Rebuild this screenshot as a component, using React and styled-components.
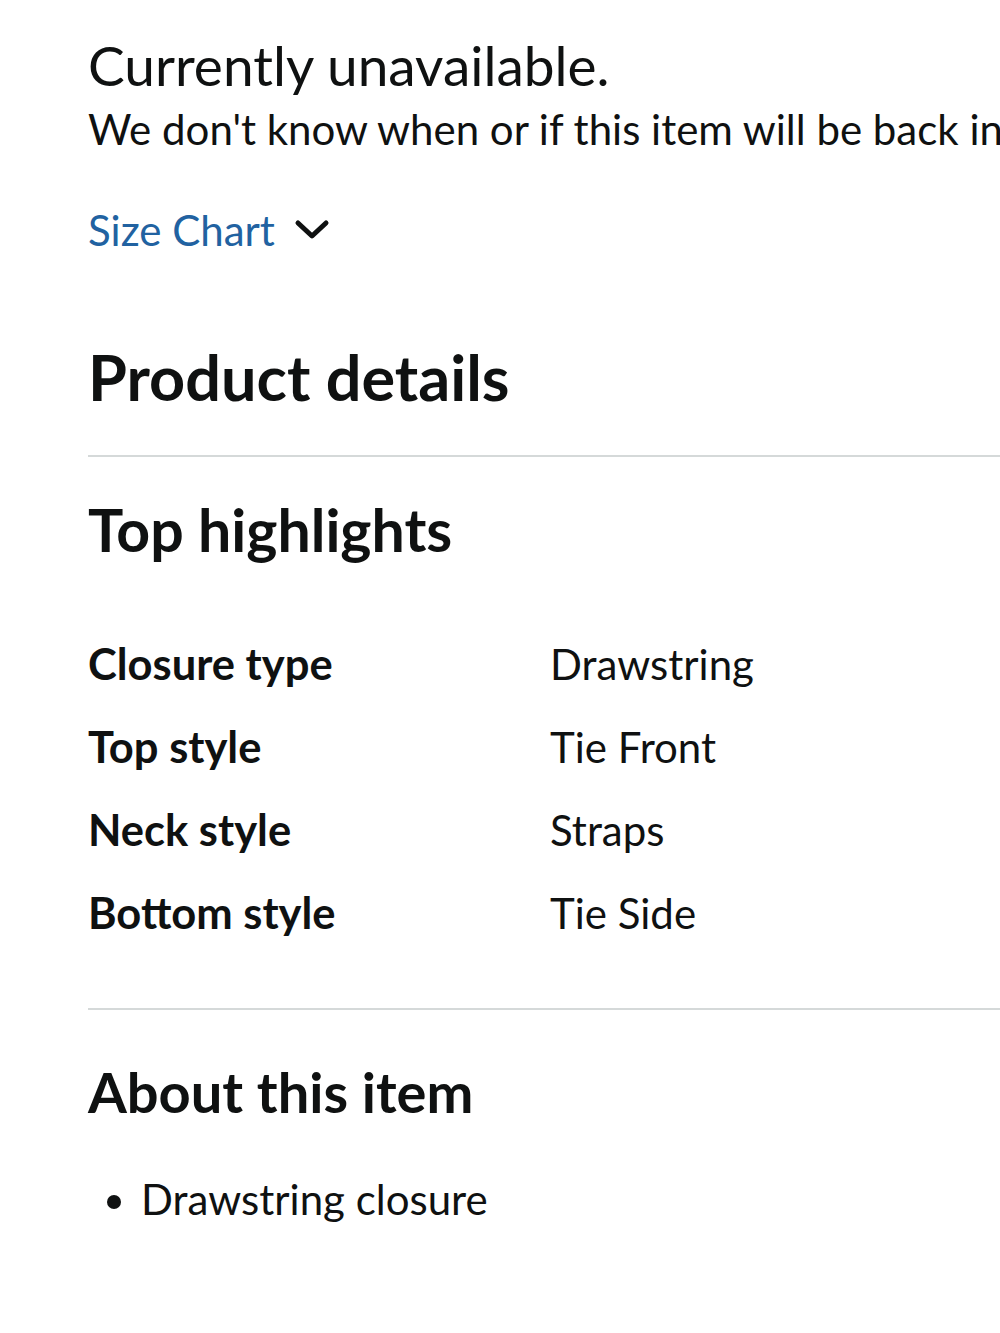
import React from 'react';
import styled, { createGlobalStyle } from 'styled-components';

const GlobalStyle = createGlobalStyle`
  html, body {
    margin: 0;
    padding: 0;
    background: #fff;
    overflow-x: hidden;
  }
  body {
    font-family: Lato, "Noto Sans", sans-serif;
    color: #0f1111;
  }
`;

const Page = styled.div`
  width: 1000px;
  overflow: hidden;
  padding: 32px 0 80px 88px;
  box-sizing: border-box;
`;

const Status = styled.div`
  font-size: 55px;
  line-height: 1.2;
  white-space: nowrap;
`;

const Note = styled.div`
  margin-top: 6px;
  font-size: 42px;
  line-height: 1.2;
  white-space: nowrap;
`;

const SizeChart = styled.a`
  display: flex;
  align-items: center;
  gap: 19px;
  margin-top: 51px;
  height: 50px;
  font-size: 42px;
  line-height: 1.2;
  color: #2162a1;
  text-decoration: none;
  cursor: pointer;
`;

const Heading = styled.h2`
  margin: ${({ $top }) => $top} 0 0;
  font-size: ${({ $size }) => $size};
  line-height: 1.2;
  font-weight: 700;
`;

const Divider = styled.hr`
  border: none;
  border-top: 2px solid #d5d9d9;
  margin: ${({ $top }) => $top} 0 0;
`;

const Table = styled.div`
  display: grid;
  grid-template-columns: 462px 1fr;
  align-items: baseline;
  row-gap: 30.6px;
  margin-top: 71px;
  font-size: 42px;
  line-height: 1.2;
`;

const Label = styled.div`
  font-size: 43.5px;
  font-weight: 700;
`;

const Value = styled.div``;

const Bullets = styled.ul`
  margin: 49px 0 0;
  padding: 0 0 0 53px;
  font-size: 42px;
  line-height: 1.2;
`;

const Chevron = () => (
  <svg width="36" height="24" viewBox="0 0 36 24" fill="none">
    <path d="M4 5 L18 18 L32 5" stroke="#0f1111" strokeWidth="5" strokeLinecap="round" strokeLinejoin="round" />
  </svg>
);

const highlights = [
  ['Closure type', 'Drawstring'],
  ['Top style', 'Tie Front'],
  ['Neck style', 'Straps'],
  ['Bottom style', 'Tie Side'],
];

const App = () => (
  <>
    <GlobalStyle />
    <Page>
      <Status>Currently unavailable.</Status>
      <Note>We don't know when or if this item will be back in stock.</Note>
      <SizeChart>
        Size Chart <Chevron />
      </SizeChart>
      <Heading $size="63px" $top="84px">Product details</Heading>
      <Divider $top="40px" />
      <Heading $size="59px" $top="38px">Top highlights</Heading>
      <Table>
        {highlights.map(([k, v]) => (
          <React.Fragment key={k}>
            <Label>{k}</Label>
            <Value>{v}</Value>
          </React.Fragment>
        ))}
      </Table>
      <Divider $top="70px" />
      <Heading $size="56px" $top="48px">About this item</Heading>
      <Bullets>
        <li>Drawstring closure</li>
      </Bullets>
    </Page>
  </>
);

export default App;
